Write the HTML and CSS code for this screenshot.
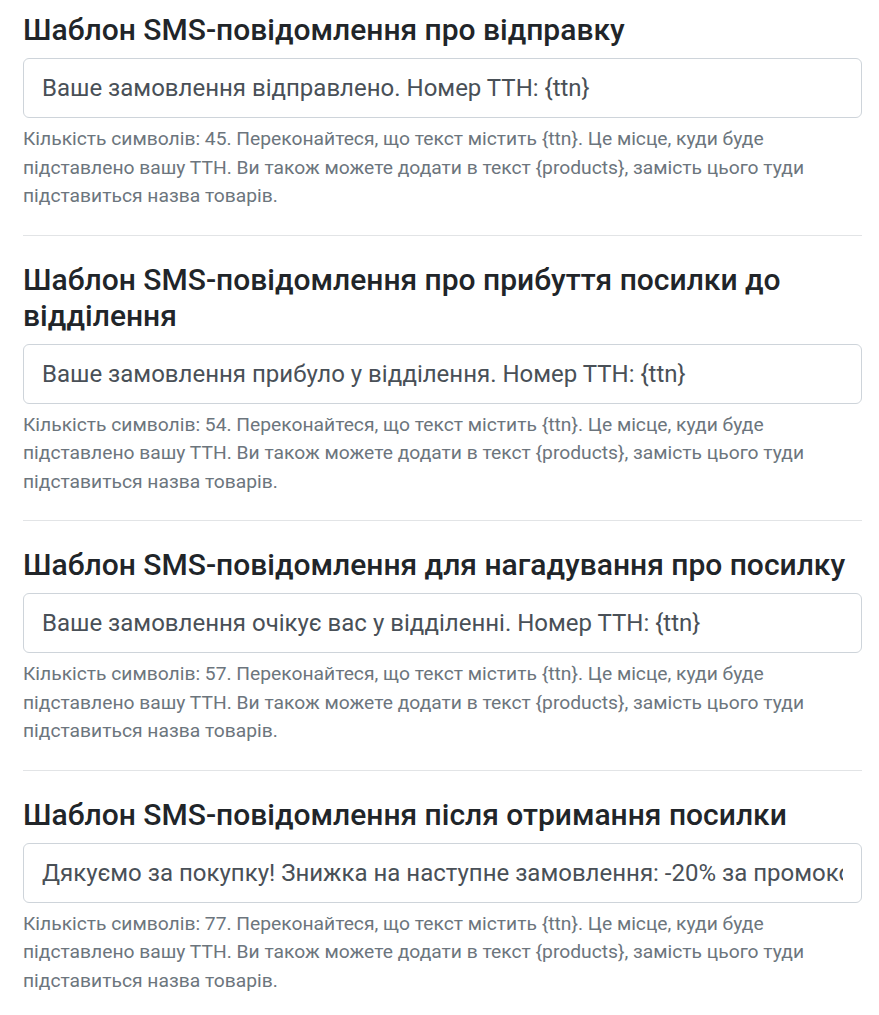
FILE: index.html
```html
<!DOCTYPE html>
<html lang="uk">
<head>
<meta charset="utf-8">
<title>Шаблони SMS</title>
<link rel="stylesheet" href="styles.css">
</head>
<body>
<main class="page">
  <section class="field">
    <h2 class="field-title">Шаблон SMS-повідомлення про відправку</h2>
    <input class="field-input" type="text" value="Ваше замовлення відправлено. Номер ТТН: {ttn}">
    <p class="field-help">Кількість символів: 45. Переконайтеся, що текст містить {ttn}. Це місце, куди буде підставлено вашу ТТН. Ви також можете додати в текст {products}, замість цього туди підставиться назва товарів.</p>
  </section>
  <hr class="divider">
  <section class="field">
    <h2 class="field-title">Шаблон SMS-повідомлення про прибуття посилки до відділення</h2>
    <input class="field-input" type="text" value="Ваше замовлення прибуло у відділення. Номер ТТН: {ttn}">
    <p class="field-help">Кількість символів: 54. Переконайтеся, що текст містить {ttn}. Це місце, куди буде підставлено вашу ТТН. Ви також можете додати в текст {products}, замість цього туди підставиться назва товарів.</p>
  </section>
  <hr class="divider">
  <section class="field">
    <h2 class="field-title">Шаблон SMS-повідомлення для нагадування про посилку</h2>
    <input class="field-input" type="text" value="Ваше замовлення очікує вас у відділенні. Номер ТТН: {ttn}">
    <p class="field-help">Кількість символів: 57. Переконайтеся, що текст містить {ttn}. Це місце, куди буде підставлено вашу ТТН. Ви також можете додати в текст {products}, замість цього туди підставиться назва товарів.</p>
  </section>
  <hr class="divider">
  <section class="field">
    <h2 class="field-title">Шаблон SMS-повідомлення після отримання посилки</h2>
    <input class="field-input" type="text" value="Дякуємо за покупку! Знижка на наступне замовлення: -20% за промокодом THANK20">
    <p class="field-help">Кількість символів: 77. Переконайтеся, що текст містить {ttn}. Це місце, куди буде підставлено вашу ТТН. Ви також можете додати в текст {products}, замість цього туди підставиться назва товарів.</p>
  </section>
</main>
</body>
</html>
```

FILE: styles.css
```css
html, body {
  margin: 0;
  padding: 0;
  background: #ffffff;
}

body {
  font-family: Roboto, "Noto Sans", "Liberation Sans", sans-serif;
  color: #212529;
}

.page {
  width: 839px;
  padding: 12px 0 0 23px;
}

.field {
  display: flex;
  flex-direction: column;
}

.field-title {
  margin: 0 0 10px;
  font-size: 30px;
  line-height: 36px;
  font-weight: 500;
  color: #212529;
}

.field-input {
  box-sizing: border-box;
  width: 100%;
  height: 60px;
  margin: 0;
  padding: 0 18px;
  border: 1px solid #ced4da;
  border-radius: 6px;
  background: #ffffff;
  font-family: Roboto, "Noto Sans", "Liberation Sans", sans-serif;
  font-size: 24px;
  color: #495057;
  outline: none;
}

.field-help {
  margin: 7px 0 0;
  font-size: 19.25px;
  line-height: 28.67px;
  color: #6c757d;
}

.divider {
  margin: 23.5px 0 26px;
  border: 0;
  border-top: 1px solid #e2e4e6;
  height: 0;
}
```
